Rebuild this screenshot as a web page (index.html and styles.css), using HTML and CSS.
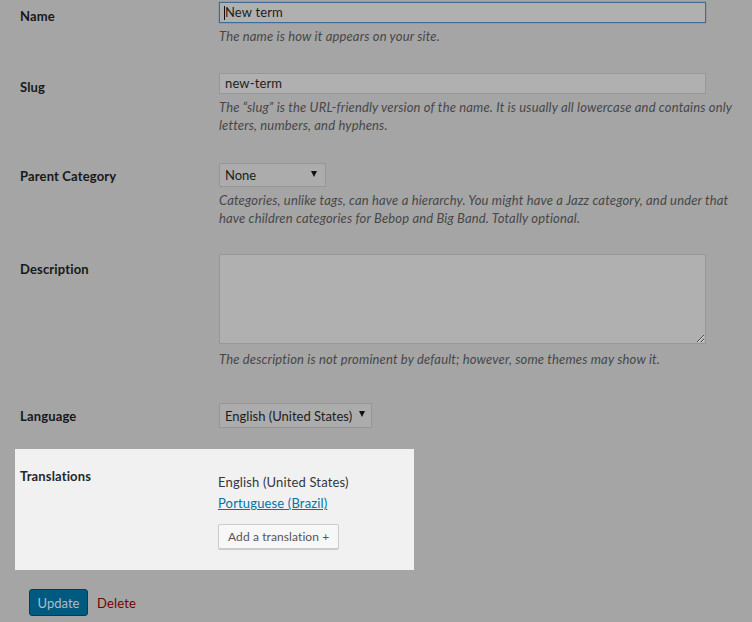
FILE: index.html
```html
<!DOCTYPE html>
<html>
<head>
<meta charset="utf-8">
<link rel="stylesheet" href="styles.css">
</head>
<body>
<div class="page">
  <div class="row row-name">
    <div class="label lab-input">Name</div>
    <div class="field">
      <div class="input focused"><span class="caret"></span>New term</div>
      <p class="desc">The name is how it appears on your site.</p>
    </div>
  </div>

  <div class="row row-slug">
    <div class="label lab-input">Slug</div>
    <div class="field">
      <div class="input">new-term</div>
      <p class="desc">The “slug” is the URL-friendly version of the name. It is usually all lowercase and contains only<br>letters, numbers, and hyphens.</p>
    </div>
  </div>

  <div class="row row-parent">
    <div class="label lab-select">Parent Category</div>
    <div class="field">
      <div class="select sel-parent"><span>None</span><span class="arrow"></span></div>
      <p class="desc">Categories, unlike tags, can have a hierarchy. You might have a Jazz category, and under that<br>have children categories for Bebop and Big Band. Totally optional.</p>
    </div>
  </div>

  <div class="row row-desc">
    <div class="label lab-area">Description</div>
    <div class="field">
      <textarea class="area"></textarea>
      <p class="desc desc-area">The description is not prominent by default; however, some themes may show it.</p>
    </div>
  </div>

  <div class="row row-lang">
    <div class="label lab-select">Language</div>
    <div class="field">
      <div class="select sel-lang"><span>English (United States)</span><span class="arrow"></span></div>
    </div>
  </div>

  <div class="trans">
    <div class="label trans-label">Translations</div>
    <div class="trans-field">
      <div class="trans-lang">English (United States)</div>
      <a class="trans-link" href="#">Portuguese (Brazil)</a>
      <button class="btn-add">Add a translation +</button>
    </div>
  </div>

  <div class="actions">
    <button class="btn-update">Update</button>
    <a class="delete" href="#">Delete</a>
  </div>
</div>
</body>
</html>
```

FILE: styles.css
```css
html, body {
  margin: 0;
  padding: 0;
  background: #a5a5a5;
}
body {
  width: 752px;
  height: 622px;
  overflow: hidden;
  font-family: "Lato", "Open Sans", sans-serif;
  font-size: 13px;
  letter-spacing: 0.15px;
  color: #181818;
}
.page {
  display: flex;
  flex-direction: column;
}
.row {
  display: grid;
  grid-template-columns: 199px 487px;
  padding-left: 20px;
}
.row-name { margin-top: 2px; }
.row-slug { margin-top: 28px; }
.row-parent { margin-top: 29px; }
.row-desc { margin-top: 27px; }
.row-lang { margin-top: 35px; }

.label {
  font-weight: bold;
  line-height: 18px;
  color: #181818;
}
.lab-input { margin-top: 5px; }
.lab-select { margin-top: 4px; }
.lab-area { margin-top: 6px; }

.field {
  display: flex;
  flex-direction: column;
  align-items: flex-start;
}
.input {
  box-sizing: border-box;
  width: 487px;
  height: 21px;
  border: 1px solid #979797;
  background: #b0b0b0;
  padding: 0 5px;
  line-height: 19px;
  color: #1d1d1d;
  display: flex;
  align-items: center;
}
.input.focused {
  border-color: #3f6b94;
  box-shadow: 0 0 1px #3f6b94;
}
.caret {
  width: 1px;
  height: 14px;
  background: #111;
  margin-left: -1px;
}
.desc {
  margin: 4px 0 0;
  font-style: italic;
  line-height: 18px;
  color: #474747;
  white-space: nowrap;
}
.desc-area { margin-top: 6px; }

.select {
  box-sizing: border-box;
  height: 24px;
  border: 1px solid #969696;
  background: #acacac;
  display: flex;
  align-items: center;
  justify-content: space-between;
  padding: 0 8px 0 5px;
  color: #1d1d1d;
  letter-spacing: 0;
}
.sel-parent { width: 107px; }
.sel-lang { width: 153px; height: 25px; padding-right: 6px; }
.arrow {
  width: 0;
  height: 0;
  border-left: 3px solid transparent;
  border-right: 3px solid transparent;
  border-top: 6px solid #111;
  margin-top: -3px;
}

.area {
  box-sizing: border-box;
  width: 487px;
  height: 90px;
  border: 1px solid #979797;
  background: #b0b0b0;
  margin: 0;
  padding: 0;
  display: block;
  resize: both;
  font: inherit;
}

.trans {
  margin: 21px 0 0 15px;
  width: 399px;
  box-sizing: border-box;
  background: #f1f1f1;
  display: grid;
  grid-template-columns: 198px 1fr;
  padding: 18px 0 21px 5px;
}
.trans-label { color: #23282d; }
.trans-field {
  display: flex;
  flex-direction: column;
  align-items: flex-start;
  padding-top: 6px;
}
.trans-lang {
  line-height: 18px;
  color: #32373c;
}
.trans-link {
  margin-top: 3px;
  line-height: 18px;
  color: #0073aa;
  text-decoration: underline;
}
.btn-add {
  margin-top: 12px;
  box-sizing: border-box;
  height: 25px;
  padding: 0 9px;
  border: 1px solid #cccccc;
  border-radius: 2px;
  background: #f7f7f7;
  box-shadow: 0 1px 0 #cccccc;
  font-family: inherit;
  font-size: 12px;
  letter-spacing: 0.1px;
  color: #555555;
}

.actions {
  margin: 19px 0 0 29px;
  display: flex;
  align-items: center;
  gap: 9px;
}
.btn-update {
  box-sizing: border-box;
  width: 59px;
  height: 27px;
  border: 1px solid #003f5a;
  border-radius: 3px;
  background: #005a80;
  color: #aebec8;
  font-family: inherit;
  font-size: 13px;
  padding: 0;
}
.delete {
  color: #730000;
  text-decoration: none;
}
```
